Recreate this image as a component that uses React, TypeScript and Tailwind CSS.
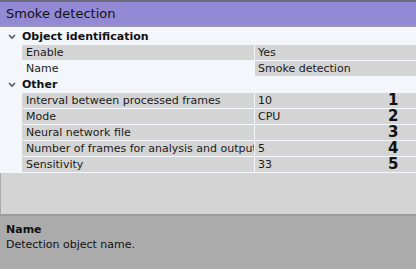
import React from "react";

const Chevron = () => (
  <svg width="8" height="6" viewBox="0 0 8 6" className="block">
    <polyline points="1,1 4,4 7,1" fill="none" stroke="#5a5a5a" strokeWidth="1.6" />
  </svg>
);

type Row = { label: string; value: string; num?: string; selected?: boolean };

const GroupRow = ({ title, extraTop }: { title: string; extraTop?: boolean }) => (
  <div className={`flex items-center h-[16px] bg-[#f3f6fb] ${extraTop ? "mt-[2px]" : ""}`}>
    <div className="w-[22px] flex justify-center pl-[1px]">
      <Chevron />
    </div>
    <div className="font-bold text-[11px] leading-[16px] text-[#111]">{title}</div>
  </div>
);

const PropRow = ({ r }: { r: Row }) => (
  <div className="flex h-[16px] bg-[#f3f6fb]">
    <div className="w-[22px] shrink-0" />
    <div
      className={`w-[232px] shrink-0 h-[15px] overflow-hidden whitespace-nowrap pl-[4px] text-[11px] leading-[15px] text-[#1a1a1a] ${
        r.selected ? "bg-[#f3f6fb]" : "bg-[#d4d4d4]"
      }`}
    >
      {r.label}
    </div>
    <div className="w-[1px] shrink-0" />
    <div className="flex-1 h-[15px] bg-[#d4d4d4] flex items-center pl-[3px] text-[11px] leading-[15px] text-[#1a1a1a] relative">
      <span>{r.value}</span>
      {r.num && (
        <span className="absolute left-[133px] top-0 font-bold text-[15px] leading-[15px] text-[#111]">
          {r.num}
        </span>
      )}
    </div>
  </div>
);

export default function App() {
  const other: Row[] = [
    { label: "Interval between processed frames", value: "10", num: "1" },
    { label: "Mode", value: "CPU", num: "2" },
    { label: "Neural network file", value: "", num: "3" },
    { label: "Number of frames for analysis and output", value: "5", num: "4" },
    { label: "Sensitivity", value: "33", num: "5" },
  ];
  return (
    <div
      className="w-[416px] h-[269px] flex flex-col overflow-hidden bg-[#d4d4d4]"
      style={{ fontFamily: '"DejaVu Sans", Verdana, sans-serif' }}
    >
      <div className="h-[2px] bg-[#6e6a80]" />
      <div className="h-[23px] bg-[#9489d4] flex items-center pl-[6px] text-[13px] text-[#111]">
        Smoke detection
      </div>
      <div className="h-[2px] bg-[#9b97a8]" />
      <div className="flex-1 flex flex-col bg-[#d4d4d4]">
        <div className="bg-[#f3f6fb]">
          <GroupRow title="Object identification" extraTop />
          <PropRow r={{ label: "Enable", value: "Yes" }} />
          <PropRow r={{ label: "Name", value: "Smoke detection", selected: true }} />
          <GroupRow title="Other" />
          {other.map((r) => (
            <PropRow key={r.label} r={r} />
          ))}
        </div>
        <div className="flex-1 border-l border-[#a9a9a9]" />
      </div>
      <div className="h-[2px] bg-[#9c9c9c]" />
      <div className="h-[53px] bg-[#ababab] px-[6px] pt-[6px] text-[11px] leading-[15px] text-[#111]">
        <div className="font-bold">Name</div>
        <div>Detection object name.</div>
      </div>
    </div>
  );
}
